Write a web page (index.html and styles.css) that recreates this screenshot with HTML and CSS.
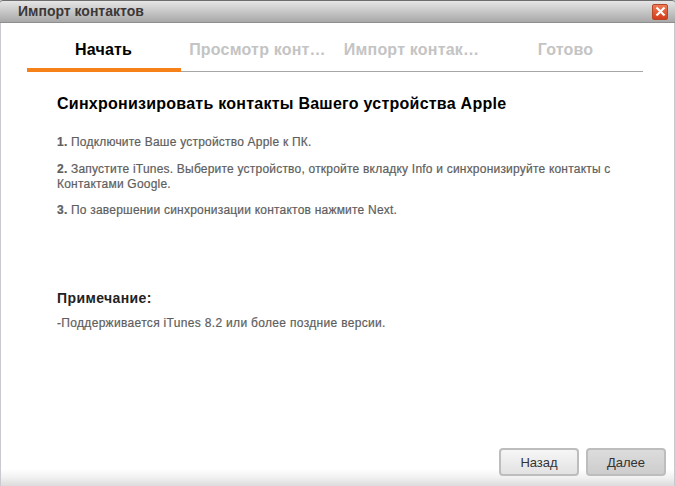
FILE: index.html
```html
<!DOCTYPE html>
<html lang="ru">
<head>
<meta charset="utf-8">
<title>Импорт контактов</title>
<link rel="stylesheet" href="styles.css">
</head>
<body>
<div class="window">
  <header class="titlebar">
    <span class="title">Импорт контактов</span>
    <span class="close">
      <svg width="11" height="11" viewBox="0 0 11 11"><path d="M1.5 1.5 9.5 9.5M9.5 1.5 1.5 9.5" stroke="#fff" stroke-width="2.2" fill="none"/></svg>
    </span>
  </header>
  <div class="body">
    <nav class="steps">
      <div class="step active">Начать</div>
      <div class="step">Просмотр конт…</div>
      <div class="step">Импорт контак…</div>
      <div class="step">Готово</div>
    </nav>
    <main class="content">
      <h1>Синхронизировать контакты Вашего устройства Apple</h1>
      <p><b>1.</b> Подключите Ваше устройство Apple к ПК.</p>
      <p class="tight"><b>2.</b> Запустите iTunes. Выберите устройство, откройте вкладку Info и синхронизируйте контакты с Контактами Google.</p>
      <p class="last"><b>3.</b> По завершении синхронизации контактов нажмите Next.</p>
      <h2>Примечание:</h2>
      <p class="note">-Поддерживается iTunes 8.2 или более поздние версии.</p>
    </main>
    <footer class="actions">
      <button class="btn">Назад</button>
      <button class="btn next">Далее</button>
    </footer>
  </div>
</div>
</body>
</html>
```
FILE: styles.css
```css
* { box-sizing: border-box; }
html, body { margin: 0; height: 100%; }
body { font-family: "Liberation Sans", Arial, sans-serif; background: #fff; overflow: hidden; }
.window {
  width: 675px; height: 486px; display: flex; flex-direction: column;
  border-left: 1px solid #c9c9cf; border-right: 1px solid #c9c9cf;
}
.titlebar {
  height: 23px; flex: none; display: flex; align-items: center; justify-content: space-between;
  margin: 0 -1px; padding: 0 7px 0 18px;
  border-top: 1px solid #6d6d6d; border-bottom: 1px solid #8e8e8e; border-radius: 3px 3px 0 0;
  background: linear-gradient(#e6e6e6, #d0d0d0 35%, #a8a8a8);
}
.title { font-size: 14px; line-height: 16px; margin-top: -2px; font-weight: bold; color: #3c3838; }
.close {
  width: 16px; height: 16px; display: flex; align-items: center; justify-content: center;
  background: linear-gradient(#ee7a55, #d43c18); border: 1px solid #b8452a; border-radius: 2px;
}
.body {
  flex: 1; display: flex; flex-direction: column; min-height: 0;
  background: linear-gradient(#fff 0, #fff 446px, #f0f0f0 455px, #dcdcdc 463px);
}
.steps {
  display: grid; grid-template-columns: repeat(4, 154px); height: 49px; margin: 0 31px 0 26px;
  border-bottom: 1px solid #a6a6a6;
}
.step {
  text-align: center; padding: 18px 1px 0 0; font-size: 16px; letter-spacing: 0.2px; font-weight: bold; color: #c4c4c4; white-space: nowrap;
}
.step.active { color: #000; border-bottom: 4px solid #f58118; margin-bottom: -1px; }
.content { flex: 1; padding: 22px 40px 0 56px; color: #5e5e5e; }
h1 { margin: 0 0 22px; font-size: 16px; letter-spacing: 0.25px; line-height: 19px; color: #000; }
p { margin: 0 0 12px; font-size: 12px; letter-spacing: 0.21px; line-height: 15px; -webkit-text-stroke: 0.2px #5e5e5e; }
p.tight { margin-bottom: 11px; }
p.last { margin-bottom: 11px; }
h2 { margin: 72px 0 9px; font-size: 14px; letter-spacing: 0.4px; line-height: 17px; color: #222; }
p.note { letter-spacing: 0.32px; }
.actions { flex: none; display: flex; justify-content: flex-end; gap: 7px; padding: 0 8px 10px 0; }
.btn {
  width: 80px; height: 28px; padding: 0; font: 13px "Liberation Sans", Arial, sans-serif; color: #333;
  border: 2px solid #bdbdbd; border-radius: 4px; background: linear-gradient(#f6f6f6, #e2e2e2);
}
.btn.next { background: linear-gradient(#dcdcdc, #cdcdcd); }
```
